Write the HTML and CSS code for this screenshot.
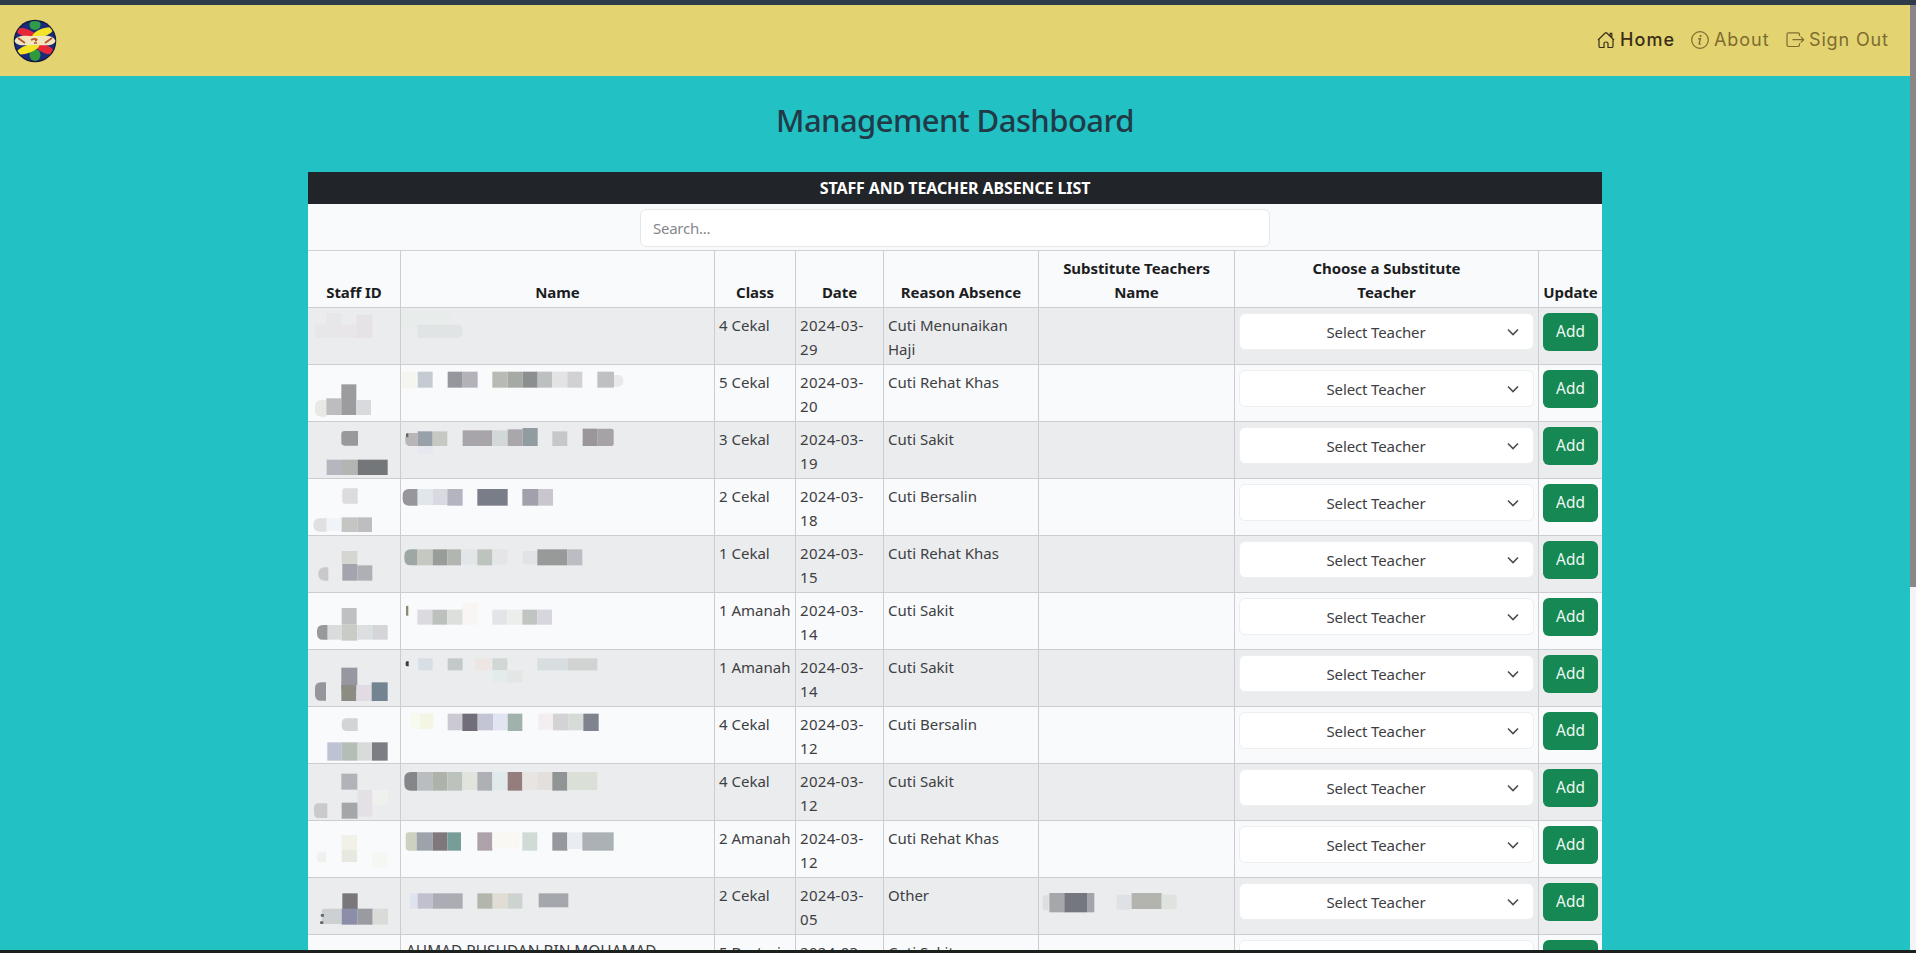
FILE: index.html
```html
<!DOCTYPE html>
<html lang="en">
<head>
<meta charset="utf-8">
<title>Management Dashboard</title>
<link rel="stylesheet" href="styles.css">
</head>
<body>
<div class="edge-top"></div>
<div class="viewport">
  <div class="page">
    <nav class="navbar">
      <svg class="logo" viewBox="0 0 44 44">
        <defs><clipPath id="disc"><circle cx="22" cy="22" r="20"/></clipPath></defs>
        <circle cx="22" cy="22" r="21.3" fill="#10183a"/>
        <g clip-path="url(#disc)">
          <rect width="44" height="44" fill="#1c2b78"/>
          <ellipse cx="22" cy="6" rx="5.500" ry="5" fill="#2f9a4a"/>
          <ellipse cx="22" cy="36" rx="5.500" ry="6" fill="#2f9a3c"/>
          <ellipse cx="13" cy="14" rx="10" ry="4" fill="#e8283a" transform="rotate(18 13 14)"/>
          <ellipse cx="30" cy="13.500" rx="11" ry="4" fill="#f3e526" transform="rotate(-20 30 13.500)"/>
          <ellipse cx="32" cy="30" rx="10" ry="4" fill="#e8283a" transform="rotate(22 32 30)"/>
          <ellipse cx="15" cy="30" rx="12" ry="4" fill="#f3e526" transform="rotate(-20 15 30)"/>
        </g>
        <path d="M1.500 22C4 15 13 17 22 17s18-2 20.500 5C40 28 31 26 22 26S4 28 1.500 22z" fill="#f1e6bd"/>
        <path d="M5 19l7 5M39 19l-7 5M18 21c4-2 8-1 4 1M21 24h3" stroke="#b4532c" stroke-width="1.700" fill="none"/>
      </svg>
      <div class="links">
        <a class="link link-home"><svg class="icon" viewBox="0 0 18 18"><path d="M2 8v7.200q0 1.300 1.300 1.300H7v-4.300q0-1.200 2-1.200t2 1.200v4.300h3.700q1.300 0 1.300-1.300V8M1 9l7.200-7q.8-.7 1.600 0L17 9M13.200 5V2.300h1.600v4.200"/></svg><span>Home</span></a>
        <a class="link link-about"><svg class="icon" viewBox="0 0 18 18"><circle cx="9" cy="9" r="8.300"/><path d="M7.300 7.700h2L8.200 12.500q-.1 1 1.500.4" stroke-width="1.400"/><circle cx="9.600" cy="5" r=".5"/></svg><span>About</span></a>
        <a class="link link-out"><svg class="icon" viewBox="0 0 18 18"><path d="M13.500 5V3.500q0-1.700-1.700-1.700H2.500Q1 1.800 1 3.500v10.300q0 1.700 1.500 1.700h9.300q1.700 0 1.700-1.700v-1.500M6.500 8.700h11M14.700 5.700l3 3-3 3"/></svg><span>Sign Out</span></a>
      </div>
    </nav>
    <h1 class="title">Management Dashboard</h1>
    <section class="panel">
      <div class="caption"><span>STAFF AND TEACHER ABSENCE LIST</span></div>
      <div class="search-row"><input class="search" placeholder="Search..."></div>
      <table class="grid">
        <colgroup><col class="c1"><col class="c2"><col class="c3"><col class="c4"><col class="c5"><col class="c6"><col class="c7"><col class="c8"></colgroup>
        <thead><tr><th>Staff ID</th><th>Name</th><th>Class</th><th>Date</th><th>Reason Absence</th><th>Substitute Teachers<br>Name</th><th>Choose a Substitute<br>Teacher</th><th>Update</th></tr></thead>
        <tbody id="rows"></tbody>
      </table>
    </section>
  </div>
  <div class="scrollbar"><div class="thumb"></div></div>
</div>
<div class="edge-bottom"></div>
<script src="rows.js"></script>
</body>
</html>
```
FILE: styles.css
```css
* { box-sizing: border-box; }
body { margin: 0; height: 953px; overflow: hidden; display: flex; flex-direction: column; font: 15px/24px "Noto Sans", "Open Sans", sans-serif; color: #3d4043; background: #22c1c4; }
.edge-top { flex: none; height: 5px; background: #2f3b48; }
.edge-bottom { flex: none; height: 3px; background: #1b211d; }
.viewport { flex: 1; min-height: 0; display: flex; }
.page { flex: 1; overflow: hidden; }
.scrollbar { width: 6px; background: #f4f4f8; }
.thumb { height: 582px; background: #8b8788; }
.navbar { height: 71px; background: #e3d471; display: flex; align-items: center; justify-content: space-between; padding: 0 20px 0 13px; }
.logo { width: 44px; height: 44px; }
.links { display: flex; align-items: center; font: 18px/24px Inter, sans-serif; color: #7d6c30; padding-bottom: 2px; }
.link { display: flex; align-items: center; gap: 5px; white-space: nowrap; }
.icon { flex: none; width: 18px; height: 18px; fill: none; stroke: currentColor; stroke-width: 1.2; overflow: visible; }
.link-home { color: #3a2d17; font-weight: 500; width: 94px; letter-spacing: 1.1px; }
.link-about { width: 95px; letter-spacing: .95px; }
.link-out { width: 104px; letter-spacing: .85px; }
.title { margin: 0; height: 96px; padding: 24px 0 0; text-align: center; font-size: 31px; letter-spacing: -.57px; line-height: 40px; font-weight: 500; color: #213a47; }
.panel { width: 1294px; margin-left: 308px; background: #f9fafc; }
.caption { height: 32px; background: #212429; color: #fff; font-size: 16px; letter-spacing: -.11px; font-weight: 700; line-height: 32px; text-align: center; }
.search-row { height: 47px; padding-top: 1px; border-bottom: 1px solid #cfd1d4; display: flex; justify-content: center; align-items: center; }
.search { width: 630px; height: 38px; border: 1px solid #e5e7ea; border-radius: 6px; background: #fff; padding: 1px 12px 0; font: inherit; letter-spacing: -.25px; }
.search::placeholder { color: #85888c; opacity: 1; }
.grid { width: 1294px; table-layout: fixed; border-collapse: separate; border-spacing: 0; }
.c1 { width: 93px; } .c2 { width: 314px; } .c3 { width: 81px; } .c4 { width: 88px; }
.c5 { width: 155px; } .c6 { width: 196px; } .c7 { width: 304px; } .c8 { width: 63px; }
th, td { height: 57px; padding: 5px 4px 3px 4px; border-right: 1px solid #cbcdd0; border-bottom: 1px solid #cbcdd0; vertical-align: top; text-align: left; white-space: nowrap; }
th { padding: 5px 3px 3px; vertical-align: bottom; text-align: center; font-weight: 700; letter-spacing: -.06px; color: #1c1d1f; }
th:last-child, td:last-child { border-right: 0; }
tbody tr:nth-child(odd) td { background: #ebecee; }
td.redacted { padding: 0; }
td.date { letter-spacing: .3px; }
td.name { font-size: 15.4px; padding-left: 5px; }
.mosaic { display: block; height: 56px; }
.select { display: flex; align-items: center; height: 37px; background: #fff; border: 1px solid #eceef0; border-radius: 6px; padding: 0 14px 0 0; letter-spacing: -.13px; }
.select span { flex: 1; text-align: center; padding: 1px 0 0 5px; }
.chevron { width: 12px; height: 8px; fill: none; stroke: #4a4d50; stroke-width: 1.6; }
.add { display: block; width: 55px; height: 38px; border: 0; border-radius: 6px; background: #168853; color: #eefaf4; font: inherit; font-size: 15.4px; padding: 0; }
```
FILE: rows.js
```js
// Mosaic blocks: [x, y, width, height, colour, radius], in thirds of a pixel.
// A positive radius rounds the left side, a negative one the right side.
const rows = [
  ["4 Cekal", "29", "Cuti Menunaikan<br>Haji",
    [[45,50,34,40,"#e8e6e9"],[79,15,44,75,"#e7e6e8"],[123,50,46,40,"#e8e6e8"],[169,20,48,70,"#e5e3e6"]],
    [[303,15,47,45,"#e8ecea"],[353,15,105,35,"#e8edec"],[353,50,134,40,"#e0e4e4",-14]]],
  ["5 Cekal", "20", "Cuti Rehat Khas",
    [[45,105,34,50,"#e8e9e5",20],[79,100,45,50,"#bdbdc0"],[124,58,45,92,"#9c9c9f"],[169,105,44,45,"#d9dade"]],
    [[305,20,45,50,"#f5f6f0"],[353,20,45,48,"#c5cbd3"],[443,20,45,48,"#96979e"],[488,20,45,48,"#b3b2b9"],[577,20,46,48,"#b8bbb3"],[623,20,45,48,"#a6aaa4"],[668,20,45,48,"#8b8f8f"],[713,20,44,48,"#bcc1c0"],[757,20,45,48,"#e3e3e5"],[802,20,45,48,"#d1d1d4"],[892,20,50,48,"#bfc0c3"],[942,30,28,35,"#e9e9eb",-16]]],
  ["3 Cekal", "19", "Cuti Sakit",
    [[124,27,50,44,"#98989d",10],[80,113,46,46,"#b6b6bf"],[126,113,47,46,"#b2b5b1"],[173,113,90,46,"#73777a"]],
    [[316,33,37,39,"#b8b6b8",14],[318,34,7,12,"#66665c",3],[353,28,45,44,"#98a0aa"],[398,28,44,44,"#c5c9c2"],[488,25,89,47,"#a8a5aa"],[577,25,46,47,"#d1d8d7"],[623,22,45,50,"#aaa7ac"],[668,18,45,54,"#919ca0"],[757,28,45,44,"#c5c8c8"],[848,20,45,52,"#9a969b"],[893,20,48,52,"#a6a3a6",-6],[353,72,45,24,"#e5e8ef"]]],
  ["2 Cekal", "18", "Cuti Bersalin",
    [[127,28,46,46,"#dcdcdf",8],[40,118,40,40,"#e0e0e0",20],[80,118,45,38,"#f0f3f7"],[125,115,47,44,"#c5c6c4"],[172,115,44,44,"#bebec0"]],
    [[308,30,45,50,"#96969c",20],[353,30,45,48,"#e0e7ec"],[398,30,44,48,"#d9d9e2"],[442,30,46,50,"#b3b4c0"],[532,30,91,50,"#797d87"],[667,30,49,50,"#a2a0aa"],[716,30,43,50,"#c9c6ce"]]],
  ["1 Cekal", "15", "Cuti Rehat Khas",
    [[125,45,47,40,"#d5d6d2"],[55,94,30,40,"#c8c8cd",22],[127,84,45,50,"#a3a4ae"],[172,88,45,46,"#aeb0b5"]],
    [[313,40,38,48,"#9da8a4",20],[351,40,47,48,"#c5c8c1"],[398,40,44,48,"#999d9a"],[442,40,41,48,"#b2b6b0"],[483,40,49,45,"#e2e6e9"],[532,40,45,48,"#bdc4be"],[577,40,45,45,"#e5e5e8"],[668,45,44,40,"#e1e4e7"],[712,40,90,48,"#979a98"],[802,40,45,48,"#babdc2"]]],
  ["1 Amanah", "14", "Cuti Sakit",
    [[125,45,45,50,"#bfc0c2"],[51,96,32,44,"#98999b",18],[83,96,42,44,"#d9dbdd"],[125,95,47,48,"#c8ccc4"],[172,96,45,44,"#dcdfe0"],[217,96,46,44,"#d4d4d9"]],
    [[318,38,7,30,"#8b8972",3],[352,50,45,45,"#dcdae1"],[397,50,45,45,"#bcc1bd"],[442,50,46,45,"#dce0dc"],[488,30,45,65,"#f9f5f3"],[577,50,45,45,"#e2e4e8"],[622,50,45,45,"#ebeeea"],[667,50,45,45,"#c1c5c1"],[712,50,44,45,"#d6d6dc"]]],
  ["1 Amanah", "14", "Cuti Sakit",
    [[124,53,48,66,"#9697a0"],[45,97,33,55,"#95969b",18],[124,105,45,48,"#8c8c83"],[169,105,46,48,"#e2dbe4"],[215,97,48,56,"#728391"]],
    [[317,34,9,15,"#3c3c3c",4],[355,25,43,36,"#d8dfe4"],[443,25,45,36,"#c3c9ca"],[525,25,47,36,"#eee6e4"],[577,25,45,36,"#d0d7d4"],[712,25,91,36,"#d8dde0"],[803,25,89,36,"#d0d3d1"],[577,61,45,36,"#e4eceb"],[622,61,45,36,"#e4e6e5"]]],
  ["4 Cekal", "12", "Cuti Bersalin",
    [[125,34,48,38,"#d3d4d6",16],[82,106,43,55,"#bdc3d3"],[125,106,48,55,"#b5bdb7"],[173,106,43,55,"#d9dada"],[216,106,47,55,"#7d7e84"]],
    [[330,20,30,46,"#f7faee"],[360,20,40,46,"#f4f5e2"],[443,20,44,50,"#cbc9d2"],[487,20,46,52,"#716e79"],[533,20,46,50,"#c4c5d4"],[579,20,44,50,"#e0e5f1"],[623,20,44,52,"#a0b2ab"],[715,20,44,48,"#f4eef0"],[759,20,47,50,"#d3d3d6"],[806,20,44,50,"#d6dbd7"],[850,20,46,52,"#7e838d"]]],
  ["4 Cekal", "12", "Cuti Sakit",
    [[124,29,48,48,"#b2b3b8"],[42,118,40,44,"#cacaca",14],[125,116,48,48,"#a5a6aa"],[173,78,44,80,"#e3e0e6"],[217,78,48,44,"#eff1ef"]],
    [[313,24,38,56,"#85868a",20],[351,24,46,56,"#b9bdc0"],[397,24,45,56,"#adb3aa"],[442,24,45,56,"#bcc3bc"],[487,24,45,54,"#e1e4dd"],[532,24,45,56,"#aeb0b5"],[577,24,45,54,"#e0eaeb"],[623,24,44,56,"#967d7d"],[667,24,45,54,"#e8e4e1"],[712,24,45,54,"#e3dfdc"],[757,24,45,56,"#919494"],[802,24,90,54,"#dadfd8"]]],
  ["2 Amanah", "12", "Cuti Rehat Khas",
    [[125,42,46,45,"#f2f1e9"],[125,87,46,36,"#e7e9e1"],[50,92,28,32,"#eff1ef",14],[217,92,45,50,"#f5f7f2"]],
    [[317,34,33,55,"#cdd1bf",10],[350,34,48,55,"#9ca3ab"],[398,34,44,55,"#7e777c"],[442,34,41,55,"#779d99"],[532,34,45,55,"#aea2ab"],[577,34,80,48,"#faf8f3"],[667,34,45,55,"#cfdbd4"],[757,34,45,55,"#95989c"],[802,34,45,50,"#e9edf1"],[847,34,94,55,"#abb1b4"]]],
  ["2 Cekal", "05", "Other",
    [[127,46,46,50,"#79777b"],[65,92,60,46,"#cdd0d3",8],[62,108,10,8,"#66686a",3],[60,130,10,8,"#66686a",3],[125,92,47,48,"#8c8ea9"],[172,92,46,48,"#999ba0"],[218,92,46,48,"#dadbd8"]],
    [[330,46,23,46,"#dfe3ee"],[353,46,45,46,"#c0c0ce"],[398,46,90,46,"#abacb4"],[532,46,46,46,"#b3b6ac"],[578,46,45,46,"#e0ded4"],[623,46,44,46,"#cdd3cf"],[716,46,89,42,"#a4a7ac"]],
    [[2228,52,18,45,"#dddee0",9],[2248,45,45,58,"#a5a7ab"],[2293,45,68,58,"#74777e"],[2361,45,22,58,"#a3a5ac"],[2450,50,45,45,"#dfe2e4"],[2495,45,90,48,"#b2b4ad"],[2585,50,45,44,"#dfe3df"]]],
  ["5 Bestari", "03", "Cuti Sakit", [], null]
];

function block(x, y, w, h, fill, r = 0) {
  if (!r) return `<rect x="${x}" y="${y}" width="${w}" height="${h}" fill="${fill}"/>`;
  const side = r > 0 ? 1 : -1;
  const flat = r > 0 ? x + w : x;
  const round = r > 0 ? x : x + w;
  const k = Math.min(Math.abs(r), h / 2, w);
  return `<path fill="${fill}" d="M${flat} ${y}H${round + side * k}Q${round} ${y} ${round} ${y + k}V${y + h - k}Q${round} ${y + h} ${round + side * k} ${y + h}H${flat}z"/>`;
}

function mosaic(blocks, left, width) {
  const shapes = blocks.map(([x, ...rest]) => block(x - left, ...rest)).join("");
  return `<svg class="mosaic" width="${width}" height="56" viewBox="0 0 ${width * 3} 168">${shapes}</svg>`;
}

document.getElementById("rows").innerHTML = rows.map(([cls, day, reason, id, name, sub]) => `
<tr>
  <td class="redacted">${mosaic(id, 24, 92)}</td>
  ${name ? `<td class="redacted">${mosaic(name, 303, 313)}</td>` : `<td class="name">AHMAD RUSHDAN BIN MOHAMAD</td>`}
  <td>${cls}</td>
  <td class="date">2024-03-<br>${day}</td>
  <td>${reason}</td>
  <td class="redacted">${sub ? mosaic(sub, 2217, 195) : ""}</td>
  <td><div class="select"><span>Select Teacher</span><svg class="chevron" viewBox="0 0 12 8"><path d="M1 1.500l5 5 5-5"/></svg></div></td>
  <td><button class="add">Add</button></td>
</tr>`).join("");
```
